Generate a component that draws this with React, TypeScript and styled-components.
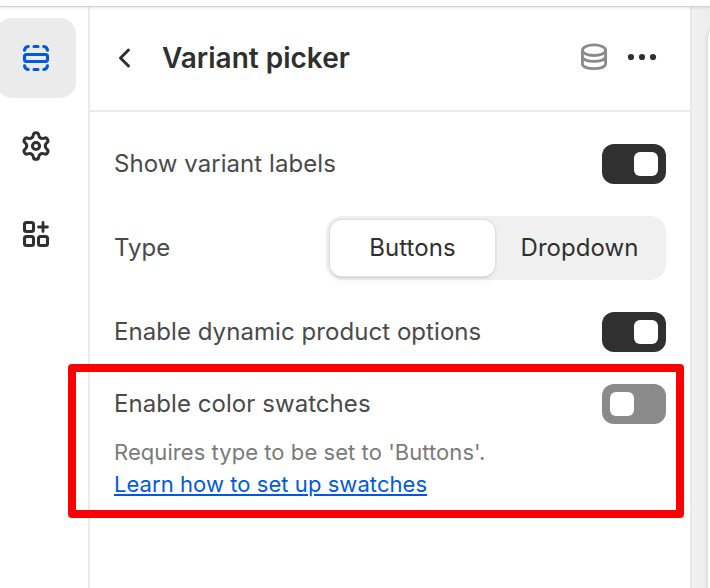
import React from "react";
import styled, { createGlobalStyle } from "styled-components";

const GlobalStyle = createGlobalStyle`
  *, *::before, *::after { box-sizing: border-box; }
  html, body { margin: 0; padding: 0; overflow: hidden; }
  body { font-family: Inter, "Liberation Sans", sans-serif; background: #fff; color: #303030; -webkit-font-smoothing: antialiased; }
  button { font: inherit; color: inherit; border: 0; padding: 0; background: none; cursor: pointer; }
  svg { display: block; }
`;

const Editor = styled.div`
  position: relative;
  display: flex;
  flex-direction: column;
  width: 710px;
  height: 588px;
  overflow: hidden;
`;

const TopBar = styled.header`
  flex: none;
  height: 6px;
  background: #fff;
  position: relative;
  z-index: 1;
  box-shadow: 0 1px 0 #d2d2d2, 0 2px 3px rgba(0, 0, 0, 0.1);
`;

const Body = styled.div`
  flex: 1;
  display: flex;
  min-height: 0;
`;

const Rail = styled.nav`
  flex: none;
  width: 90px;
  padding-top: 12px;
  border-right: 2px solid #ebebeb;
  display: flex;
  flex-direction: column;
  gap: 8px;
`;

const RailButton = styled.button<{ $active?: boolean }>`
  width: 80px;
  height: 80px;
  margin-left: -4px;
  border-radius: 16px;
  display: grid;
  place-items: center;
  background: ${(p) => (p.$active ? "#ebebeb" : "transparent")};
`;

const Panel = styled.main`
  flex: none;
  width: 600px;
  background: #fff;
`;

const PanelHeader = styled.header`
  height: 106px;
  padding: 0 28px 0 14px;
  border-bottom: 2px solid #ebebeb;
  display: flex;
  align-items: center;
`;

const IconButton = styled.button`
  width: 40px;
  height: 40px;
  display: grid;
  place-items: center;
`;

const Title = styled.h1`
  flex: 1;
  margin: 0 0 0 18px;
  font-size: 28px;
  line-height: 40px;
  font-weight: 600;
  letter-spacing: 0;
`;

const HeaderActions = styled.div`
  display: flex;
  gap: 8px;
`;

const Settings = styled.div`
  padding: 32px 24px 0;
  display: flex;
  flex-direction: column;
  gap: 32px;
`;

const Row = styled.div`
  display: flex;
  align-items: center;
  justify-content: space-between;
  height: 40px;
`;

const TypeRow = styled(Row)`
  height: 64px;
`;

const Label = styled.span`
  font-size: 24px;
  line-height: 32px;
  color: #4a4a4a;
  letter-spacing: 0.06px;
  white-space: nowrap;
`;

const Track = styled.button<{ $on: boolean }>`
  width: 64px;
  height: 40px;
  padding: 8px;
  border-radius: 12px;
  display: flex;
  justify-content: ${(p) => (p.$on ? "flex-end" : "flex-start")};
  background: ${(p) => (p.$on ? "#303030" : "#8a8a8a")};
`;

const Thumb = styled.span`
  width: 24px;
  height: 24px;
  border-radius: 6px;
  background: #fff;
`;

const Segments = styled.div`
  width: 340px;
  height: 64px;
  padding: 4px;
  border-radius: 16px;
  background: #f0f0f0;
  display: flex;
  gap: 2px;
`;

const Segment = styled.button<{ $selected?: boolean }>`
  flex: 1;
  border-radius: 12px;
  font-size: 24px;
  line-height: 32px;
  letter-spacing: 0.06px;
  background: ${(p) => (p.$selected ? "#fff" : "transparent")};
  box-shadow: ${(p) =>
    p.$selected
      ? "0 0 0 1.5px #e1e1e1, 0 2px 1px rgba(0,0,0,.14), 0 6px 8px -2px rgba(0,0,0,.06)"
      : "none"};
`;

const Highlight = styled.section`
  margin: -20px -18px 0 -46px;
  width: 616px;
  height: 154px;
  border: 8px solid #f00;
  border-radius: 4px;
  padding: 12px 10px 0 38px;
`;

const Help = styled.p`
  margin: 12px 0 0;
  font-size: 22px;
  line-height: 32px;
  letter-spacing: 0.06px;
  color: #7a7a7a;
  white-space: nowrap;
`;

const HelpLink = styled.a`
  display: block;
  width: max-content;
  color: #005bdb;
  text-decoration: underline;
  text-decoration-thickness: 2px;
  text-underline-offset: 2px;
`;

const Canvas = styled.aside`
  flex: 1;
  border-left: 2px solid #e8e8e8;
  background: linear-gradient(to right, #f1f1f1 0, #eeeeee 14px);
  padding: 20px 0 0 16px;
`;

const Preview = styled.div`
  width: 60px;
  height: 600px;
  border-radius: 12px 0 0 0;
  background: #fff;
  box-shadow: 0 0 0 1px #dcdcdc, 0 0 4px rgba(0, 0, 0, 0.12);
`;

const SectionsIcon = () => (
  <svg width="28" height="28" viewBox="0 0 28 28" fill="none" stroke="#005bdb" strokeWidth="3.1" strokeLinecap="round">
    <rect x="2.5" y="10.5" width="23" height="7" rx="2" />
    <path d="M2.5 6.3c.3-2 1.8-3.5 3.7-3.8M12 2.5h4M21.8 2.5c1.9.3 3.4 1.8 3.7 3.8M2.5 21.7c.3 2 1.8 3.5 3.7 3.8M12 25.5h4M21.8 25.5c1.9-.3 3.4-1.8 3.7-3.8" />
  </svg>
);

// One cog tooth (valley to valley), pointing up; six turns of it close the outline.
const TOOTH = "M-4.6-8C-3.4-8.7-2.8-9.4-2.7-10.8C-2.6-12.5-1.7-13.3 0-13.3C1.7-13.3 2.6-12.5 2.7-10.8C2.8-9.4 3.4-8.7 4.6-8";

const GearIcon = () => (
  <svg width="32" height="32" viewBox="-16 -16 32 32" fill="none" stroke="#303030" strokeWidth="3" strokeLinecap="round">
    {[0, 60, 120, 180, 240, 300].map((turn) => (
      <path key={turn} d={TOOTH} transform={`rotate(${turn})`} />
    ))}
    <circle r="3.6" />
  </svg>
);

const AppsIcon = () => (
  <svg width="28" height="28" viewBox="0 0 28 28" fill="none" stroke="#303030" strokeWidth="3.1" strokeLinecap="round">
    <rect x="2.5" y="2.5" width="9" height="9" rx="2" />
    <rect x="2.5" y="16.5" width="9" height="9" rx="2" />
    <rect x="16.5" y="16.5" width="9" height="9" rx="2" />
    <path d="M21 2.5v9M16.5 7h9" strokeWidth="2.8" />
  </svg>
);

const BackIcon = () => (
  <svg width="40" height="40" viewBox="0 0 40 40" fill="none" stroke="#303030" strokeWidth="3" strokeLinecap="round" strokeLinejoin="round">
    <path d="M24.5 12 16.5 20l8 8" />
  </svg>
);

const DatabaseIcon = () => (
  <svg width="40" height="40" viewBox="0 0 40 40" fill="none" stroke="#8a8a8a" strokeWidth="2.8">
    <ellipse cx="20" cy="12.2" rx="11.6" ry="5.3" />
    <path d="M8.4 12.2v13.6c0 3 5.2 4.8 11.6 4.8s11.6-1.8 11.6-4.8V12.2" />
    <path d="M8.4 18.8c0 2.7 5.2 4.6 11.6 4.6s11.6-1.9 11.6-4.6" />
  </svg>
);

const MoreIcon = () => (
  <svg width="40" height="40" viewBox="0 0 40 40" fill="#303030">
    <circle cx="9" cy="19" r="3.1" />
    <circle cx="20" cy="19" r="3.1" />
    <circle cx="31" cy="19" r="3.1" />
  </svg>
);

const Switch = ({ on, label }: { on: boolean; label: string }) => (
  <Track $on={on} role="switch" aria-checked={on} aria-label={label}>
    <Thumb />
  </Track>
);

const SwitchRow = ({ label, on }: { label: string; on: boolean }) => (
  <Row>
    <Label>{label}</Label>
    <Switch on={on} label={label} />
  </Row>
);

export default function App() {
  return (
    <Editor>
      <GlobalStyle />
      <TopBar />
      <Body>
        <Rail>
          <RailButton $active aria-label="Sections"><SectionsIcon /></RailButton>
          <RailButton aria-label="Settings"><GearIcon /></RailButton>
          <RailButton aria-label="Apps"><AppsIcon /></RailButton>
        </Rail>
        <Panel>
          <PanelHeader>
            <IconButton aria-label="Back"><BackIcon /></IconButton>
            <Title>Variant picker</Title>
            <HeaderActions>
              <IconButton aria-label="Data source"><DatabaseIcon /></IconButton>
              <IconButton aria-label="More"><MoreIcon /></IconButton>
            </HeaderActions>
          </PanelHeader>
          <Settings>
            <SwitchRow label="Show variant labels" on />
            <TypeRow>
              <Label>Type</Label>
              <Segments>
                <Segment $selected>Buttons</Segment>
                <Segment>Dropdown</Segment>
              </Segments>
            </TypeRow>
            <SwitchRow label="Enable dynamic product options" on />
            <Highlight>
              <SwitchRow label="Enable color swatches" on={false} />
              <Help>
                Requires type to be set to 'Buttons'.
                <HelpLink>Learn how to set up swatches</HelpLink>
              </Help>
            </Highlight>
          </Settings>
        </Panel>
        <Canvas>
          <Preview />
        </Canvas>
      </Body>
    </Editor>
  );
}
